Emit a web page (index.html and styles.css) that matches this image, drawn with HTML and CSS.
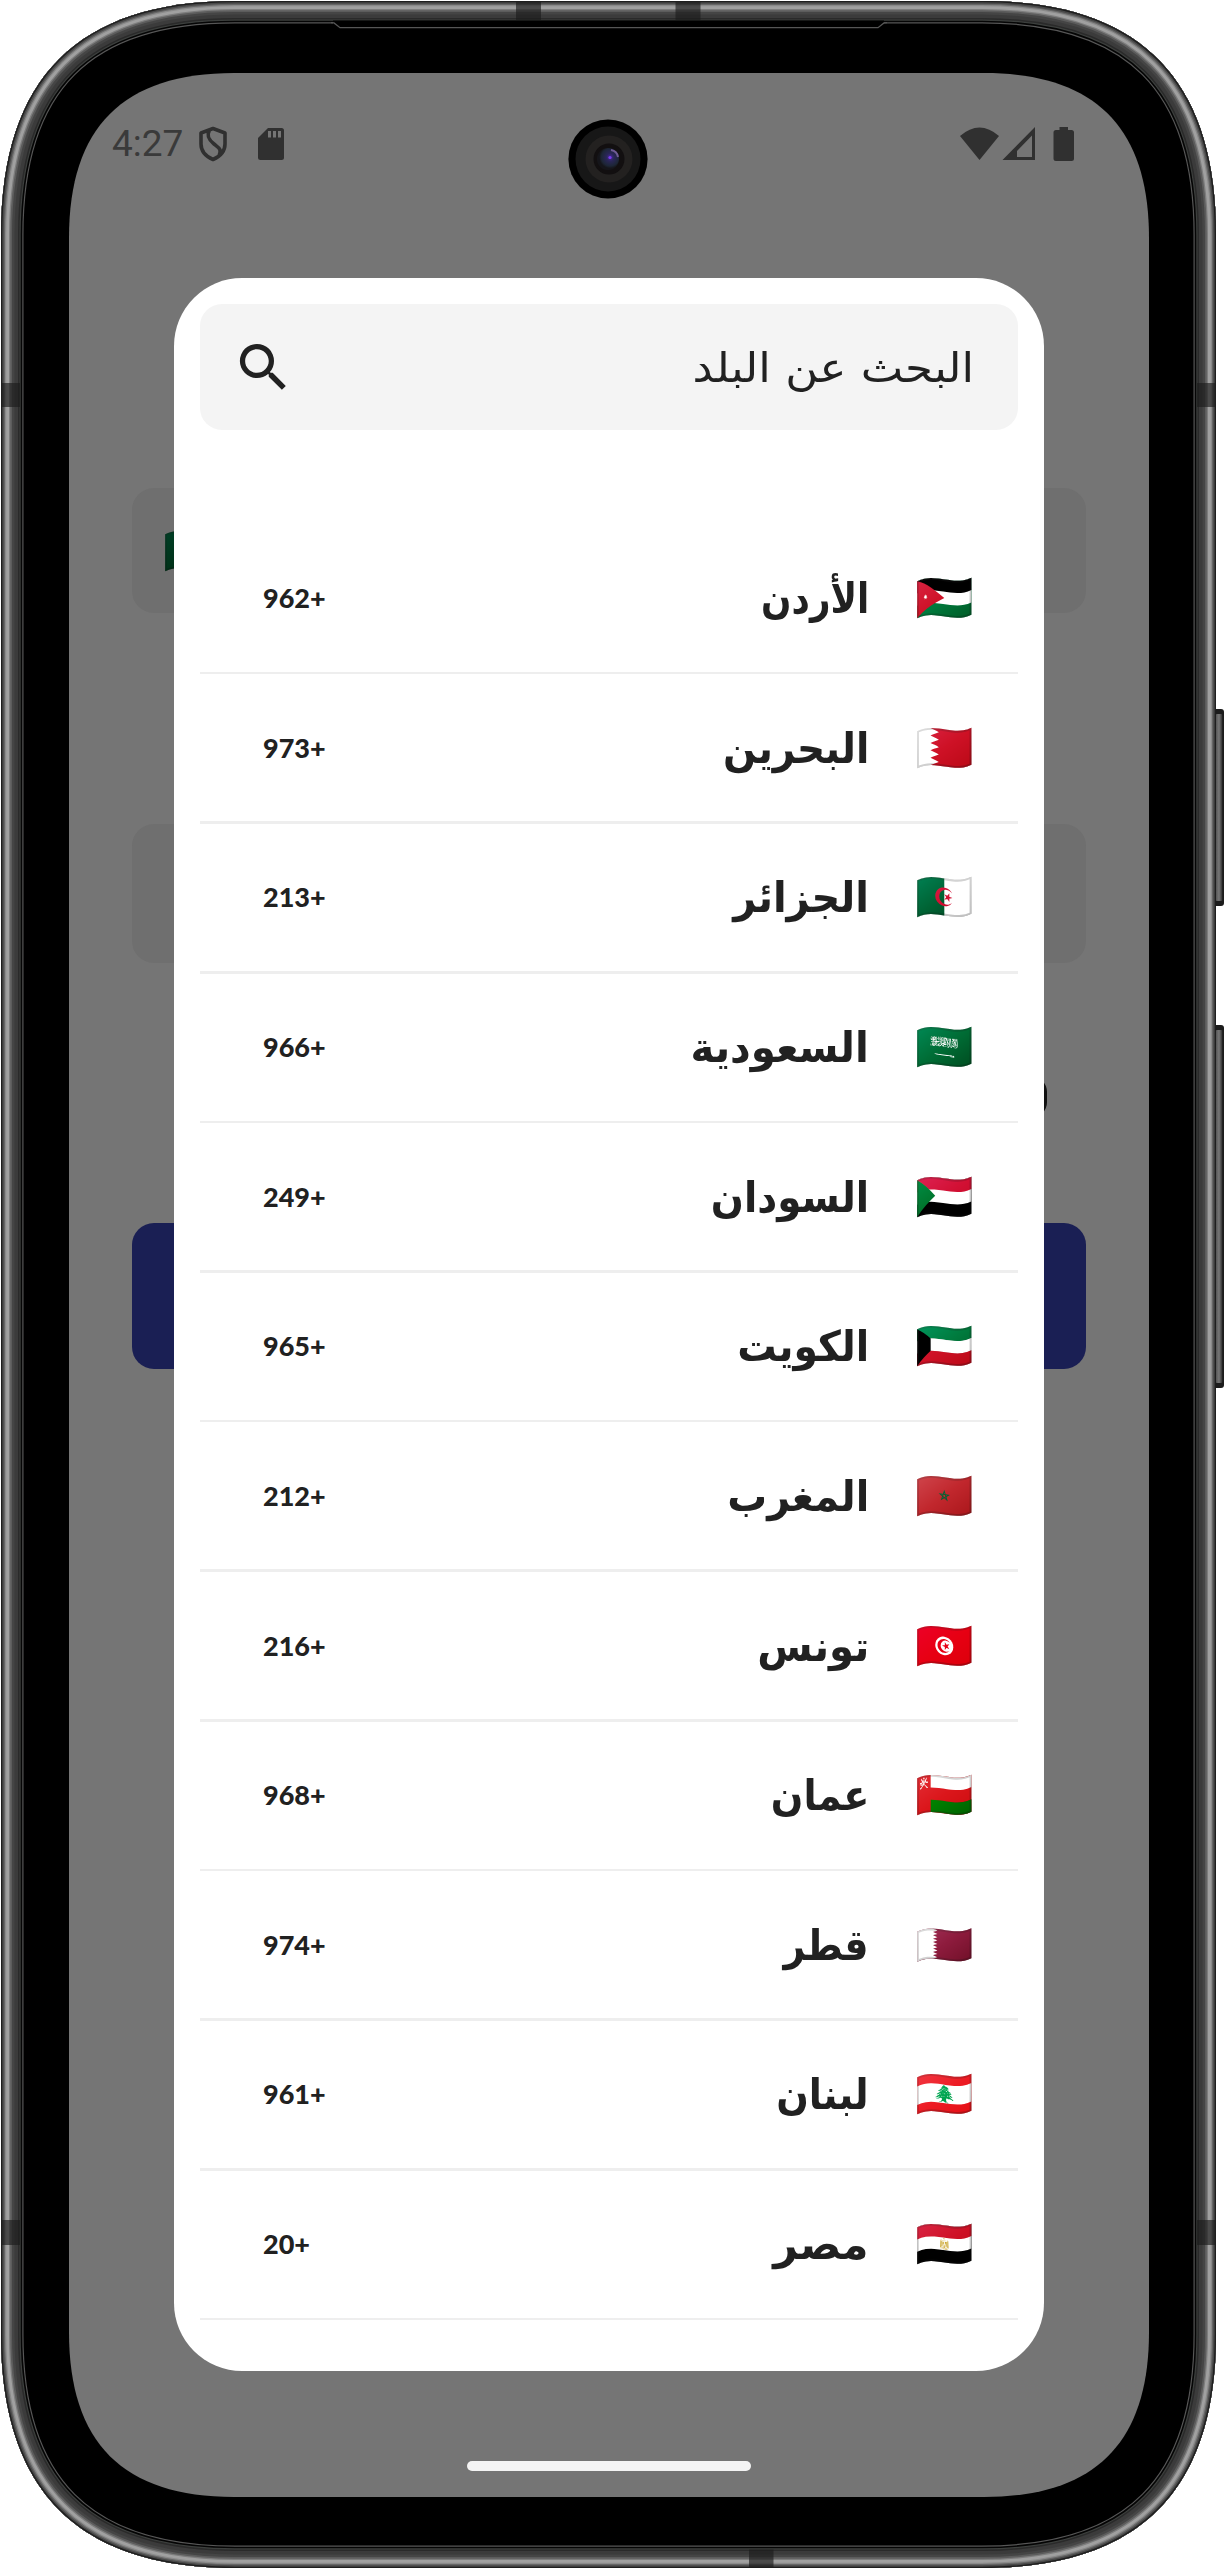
FILE: index.html
```html
<!DOCTYPE html>
<html lang="ar">
<head>
<meta charset="utf-8">
<title>اختيار البلد</title>
<link rel="stylesheet" href="styles.css">
</head>
<body>
<div class="phone">
  <svg class="chassis" viewBox="0 0 1224 2570" aria-hidden="true">
    <defs>
      <path id="shell" d="M1 235C1 78 78 1 235 1H982C1139 1 1216 78 1216 235V2334C1216 2491 1139 2568 982 2568H235C78 2568 1 2491 1 2334Z"/>
      <clipPath id="shellClip"><use href="#shell"/></clipPath>
      <linearGradient id="key"><stop offset="0" stop-color="#4a4a4a"/><stop offset=".5" stop-color="#777"/><stop offset=".8" stop-color="#444"/><stop offset="1" stop-color="#111"/></linearGradient>
    </defs>
    <rect x="1210" y="709" width="14" height="197" rx="3" fill="#1c1c1c"/>
    <rect x="1215" y="714" width="8" height="187" rx="2" fill="url(#key)"/>
    <rect x="1210" y="1025" width="14" height="363" rx="3" fill="#1c1c1c"/>
    <rect x="1215" y="1030" width="8" height="353" rx="2" fill="url(#key)"/>
    <g clip-path="url(#shellClip)" fill="none">
      <use href="#shell" fill="#000"/>
      <use href="#shell" stroke="#565656" stroke-width="45"/>
      <use href="#shell" stroke="#050505" stroke-width="42.6"/>
      <use href="#shell" stroke="#3c3f3d" stroke-width="39.4"/>
      <use href="#shell" stroke="#2a2a2a" stroke-width="37"/>
      <use href="#shell" stroke="#3b3b3b" stroke-width="34"/>
      <use href="#shell" stroke="#454545" stroke-width="27"/>
      <use href="#shell" stroke="#5c5c5c" stroke-width="22"/>
      <use href="#shell" stroke="#7d7d7d" stroke-width="18.5"/>
      <use href="#shell" stroke="#a0a0a0" stroke-width="16"/>
      <use href="#shell" stroke="#8a8a8a" stroke-width="10.5"/>
      <use href="#shell" stroke="#666" stroke-width="8"/>
      <use href="#shell" stroke="#484848" stroke-width="5.5"/>
      <use href="#shell" stroke="#1e1e1e" stroke-width="2.6"/>
      <g fill="#1b1b1b" fill-opacity=".65">
        <path d="M516 2h25v18h-25zM675.500 2h25v18h-25zM749 2549.500h24.500v18H749z"/>
        <path d="M2 383h18v24H2zM2 2220h18v25H2zM1197 383h18v24h-18zM1197 2220h18v25h-18z"/>
      </g>
    </g>
    <path d="M333 20.600H884V26H333z" fill="#000"/>
    <path d="M331 22.600L334 22.900L340 27.700H878L884 22.900L887 22.600" fill="none" stroke="#565656" stroke-width="1.300"/>
  </svg>

  <main class="screen" dir="rtl">
    <header class="status" dir="ltr">
      <span class="clock">4:27</span>
      <svg class="shield" viewBox="0 0 30 36"><path d="M15 2.500L27 7V18C27 25 22 30.500 15 33.500C8 30.500 3 25 3 18V7ZM11.500 4C8 10 11 14 16 18S24 23 21 30" fill="none" stroke="#303030" stroke-width="3.600" stroke-linejoin="round"/></svg>
      <svg class="sd" viewBox="0 0 26 32"><path d="M10 0H23.500Q26 0 26 2.500V29.500Q26 32 23.500 32H2.500Q0 32 0 29.500V10Z" fill="#303030"/><path d="M10 3h3v6.500h-3zM15 3h3v6.500h-3zM20 3h3v6.500h-3z" fill="#757575"/></svg>
      <svg class="signals" viewBox="0 0 116 34">
        <g fill="#303030"><path d="M0 9Q19.500 -8 39 9L19.500 33Z"/><path d="M75 0V33H42.500ZM72 8.500L57 24V30H72Z" fill-rule="evenodd"/><path d="M99.500 0h8.500v3h3.500q2.500 0 2.500 2.500v26q0 2.500-2.500 2.500h-15.500q-2.500 0-2.500-2.500v-26q0-2.500 2.500-2.500h3.500z"/></g>
      </svg>
    </header>

    <section class="form">
      <div class="field country"><span class="flag">🇸🇦</span></div>
      <div class="field password"></div>
      <span class="check"></span>
      <div class="submit"></div>
    </section>

    <section class="dialog">
      <div class="search">
        <span class="placeholder">البحث عن البلد</span>
        <svg class="lens" viewBox="0 0 24 24"><path fill="#212121" d="M15.500 14h-.79l-.28-.27A6.471 6.471 0 0 0 16 9.500 6.500 6.500 0 1 0 9.500 16c1.610 0 3.090-.59 4.230-1.570l.27.28v.79l5 4.990L20.490 19l-4.990-5zm-6 0C7.010 14 5 11.990 5 9.500S7.010 5 9.500 5 14 7.010 14 9.500 11.990 14 9.500 14z"/></svg>
      </div>
      <ul class="countries">
        <li><span class="flag">🇯🇴</span><span class="name" style="--fit:.85">الأردن</span><span class="dial" dir="ltr">962+</span></li>
        <li><span class="flag">🇧🇭</span><span class="name" style="--fit:.93">البحرين</span><span class="dial" dir="ltr">973+</span></li>
        <li><span class="flag">🇩🇿</span><span class="name" style="--fit:.95">الجزائر</span><span class="dial" dir="ltr">213+</span></li>
        <li><span class="flag">🇸🇦</span><span class="name" style="--fit:.96">السعودية</span><span class="dial" dir="ltr">966+</span></li>
        <li><span class="flag">🇸🇩</span><span class="name" style="--fit:.925">السودان</span><span class="dial" dir="ltr">249+</span></li>
        <li><span class="flag">🇰🇼</span><span class="name" style="--fit:.935">الكويت</span><span class="dial" dir="ltr">965+</span></li>
        <li><span class="flag">🇲🇦</span><span class="name" style="--fit:.945">المغرب</span><span class="dial" dir="ltr">212+</span></li>
        <li><span class="flag">🇹🇳</span><span class="name" style="--fit:.955">تونس</span><span class="dial" dir="ltr">216+</span></li>
        <li><span class="flag">🇴🇲</span><span class="name" style="--fit:.91">عمان</span><span class="dial" dir="ltr">968+</span></li>
        <li><span class="flag">🇶🇦</span><span class="name" style="--fit:.9">قطر</span><span class="dial" dir="ltr">974+</span></li>
        <li><span class="flag">🇱🇧</span><span class="name" style="--fit:.91">لبنان</span><span class="dial" dir="ltr">961+</span></li>
        <li><span class="flag">🇪🇬</span><span class="name" style="--fit:1.02">مصر</span><span class="dial" dir="ltr">20+</span></li>
      </ul>
    </section>

    <svg class="camera" viewBox="0 0 80 80" aria-hidden="true">
      <defs><radialGradient id="lensGlass" cx=".6" cy=".42"><stop offset="0" stop-color="#4a2a9c"/><stop offset=".35" stop-color="#2a2658"/><stop offset=".8" stop-color="#1d2636"/><stop offset="1" stop-color="#15151a"/></radialGradient></defs>
      <circle cx="40" cy="40" r="39.600" fill="#000"/>
      <circle cx="40" cy="40" r="32.500" fill="#171717"/>
      <circle cx="41" cy="40" r="23.500" fill="#232120"/>
      <circle cx="41" cy="40" r="15.500" fill="#120f10"/>
      <circle cx="40" cy="40" r="11" fill="url(#lensGlass)"/>
      <path d="M43 31Q49 32 50 38" fill="none" stroke="#6f5a94" stroke-width="2"/>
      <circle cx="42" cy="38.500" r="1.600" fill="#7a3cf0"/>
    </svg>
    <div class="home-bar"></div>
  </main>
</div>
</body>
</html>
```
FILE: styles.css
```css
body {
  margin: 0;
  background: #fff;
}

.phone {
  position: relative;
  box-sizing: border-box;
  width: 1224px;
  height: 2570px;
  padding: 73px 0 0 69px;
  overflow: hidden;
}

.chassis {
  position: absolute;
  inset: 0;
  width: 1224px;
  height: 2570px;
}

.screen {
  position: relative;
  width: 1080px;
  height: 2424px;
  background: #757575;
  clip-path: path("M0 165C0 54 54 0 165 0H915C1026 0 1080 54 1080 165V2259C1080 2370 1026 2424 915 2424H165C54 2424 0 2370 0 2259Z");
}

/* Status bar */
.status {
  display: flex;
  align-items: center;
  height: 142px;
  padding: 0 73px 0 43px;
}

.clock {
  width: 86px;
  font: 37px/40px Roboto, sans-serif;
  color: #3a3a3a;
}

.shield {
  width: 30px;
  height: 36px;
}

.sd {
  width: 26px;
  height: 32px;
  margin-left: 30px;
}

.signals {
  width: 116px;
  height: 34px;
  margin-left: auto;
}

/* Login form behind the dialog */
.form {
  display: flex;
  flex-direction: column;
  padding: 273px 63px 0;
}

.field {
  box-sizing: border-box;
  border-radius: 22px;
  background: #6f6f6f;
}

.country {
  display: flex;
  align-items: center;
  justify-content: flex-end;
  height: 125px;
  padding-left: 34px;
}

.country .flag {
  filter: brightness(.46);
}

.password {
  height: 139px;
  margin-top: 211px;
}

.check {
  width: 42px;
  height: 42px;
  margin: 113px 39px 0 0;
  border-radius: 16px;
  background: #111;
}

.submit {
  height: 146px;
  margin-top: 105px;
  border-radius: 22px;
  background: #1a1f54;
}

/* Country picker */
.dialog {
  position: absolute;
  top: 205px;
  left: 105px;
  box-sizing: border-box;
  width: 870px;
  height: 2093px;
  padding: 26px 26px 0;
  border-radius: 68px;
  background: #fff;
}

.search {
  display: flex;
  align-items: center;
  justify-content: space-between;
  box-sizing: border-box;
  height: 126px;
  padding: 0 44px 0 32px;
  border-radius: 22px;
  background: #f4f4f4;
}

.placeholder {
  padding-top: 2px;
  font: 41px/60px "DejaVu Sans", sans-serif;
  color: #212121;
  transform: scaleX(1.1);
  transform-origin: right;
}

.lens {
  width: 63px;
  height: 63px;
}

.countries {
  margin: 94.700px 0 0;
  padding: 0;
  list-style: none;
}

.countries li {
  display: grid;
  grid-template-columns: 56px 1fr auto;
  grid-template-rows: 1fr auto;
  column-gap: 49px;
  align-items: center;
  height: 149.640px;
  padding: 0 44px 0 63px;
}

.countries li::after {
  content: "";
  grid-column: 1 / -1;
  height: 2.600px;
  margin: 0 -44px 0 -63px;
  background: #eee;
}

.flag {
  width: 56px;
  font: 47px/60px "Noto Color Emoji", sans-serif;
  white-space: nowrap;
}

.name {
  justify-self: start;
  padding-top: 2px;
  font: bold 42px/60px "DejaVu Sans", sans-serif;
  color: #212121;
  transform: scaleX(var(--fit));
  transform-origin: right;
}

.dial {
  font: 900 27px/60px Lato, sans-serif;
  color: #212121;
}

/* Hardware and system overlays */
.camera {
  position: absolute;
  top: 46px;
  left: 499px;
  width: 80px;
  height: 80px;
}

.home-bar {
  position: absolute;
  bottom: 26px;
  left: 398px;
  width: 284px;
  height: 10px;
  border-radius: 5px;
  background: #f4f4f4;
}
```
